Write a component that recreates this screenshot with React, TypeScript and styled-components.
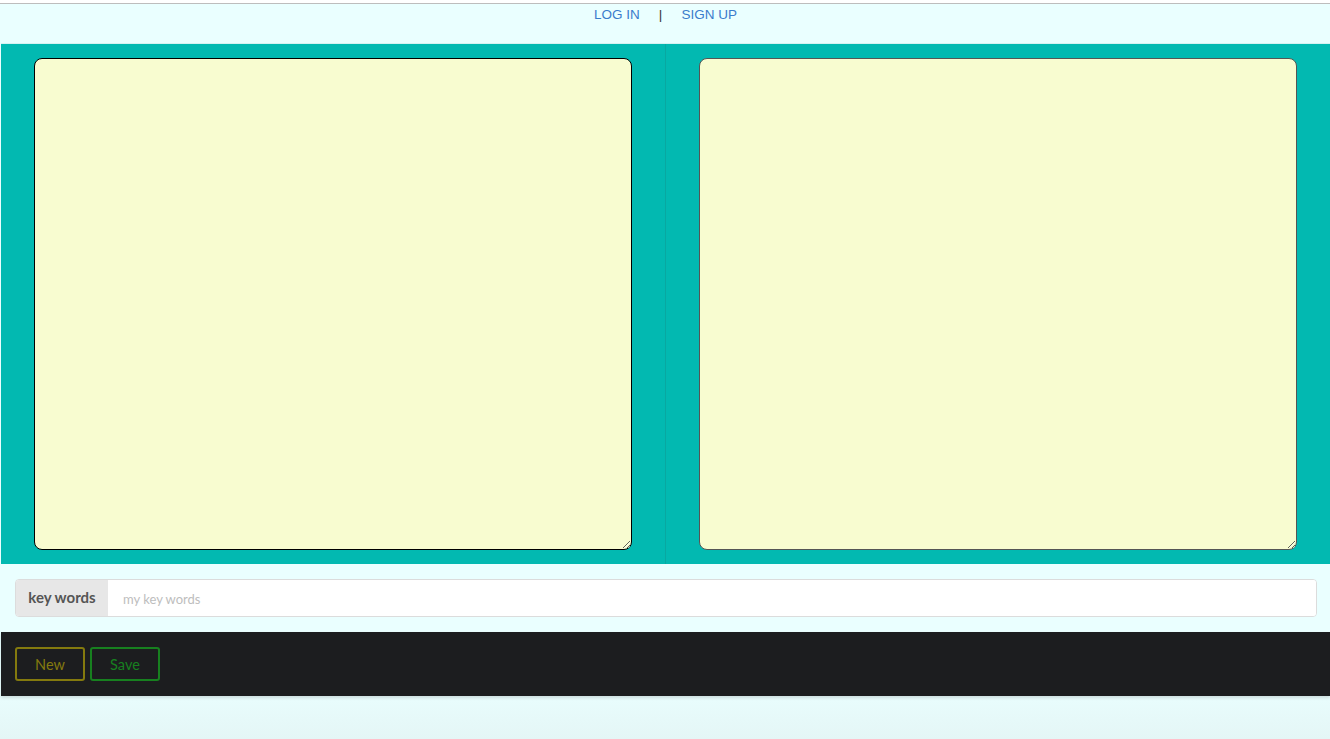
import React from "react";
import styled, { createGlobalStyle } from "styled-components";

const Global = createGlobalStyle`
  html, body { margin: 0; padding: 0; background: #ffffff; }
  body { font-family: "Liberation Sans", Arial, sans-serif; }
  * { box-sizing: border-box; }
`;

const Page = styled.div`
  margin-top: 3px;
  border-top: 1px solid #bdbdbd;
  height: 736px;
  display: flex;
  flex-direction: column;
  background: linear-gradient(#eaffff 0%, #eaffff 92%, #e4f6f6 100%);
`;

const Header = styled.header`
  height: 40px;
  display: flex;
  justify-content: center;
  align-items: flex-start;
  padding-top: 2px;
  gap: 19px;
  font-family: "Helvetica Neue", "Liberation Sans", Arial, sans-serif;
  font-size: 13.5px;
  margin-left: 1px;
  border-bottom: 1px solid #d6f2f2;
`;

const NavLink = styled.a`
  color: #3a7ccc;
  text-decoration: none;
  line-height: 18px;
`;

const Sep = styled.span`
  color: #333;
  line-height: 18px;
`;

const Editors = styled.section`
  margin-left: 1px;
  height: 520px;
  display: grid;
  grid-template-columns: 665px 1fr;
  background: #02b9b1;
`;

const Column = styled.div<{ $divider?: boolean }>`
  padding: 14px 33px 14px 33px;
  border-right: ${(p) => (p.$divider ? "1px solid #08a8a1" : "none")};
  display: flex;
`;

const Pad = styled.textarea<{ $focused?: boolean }>`
  flex: 1;
  width: 100%;
  height: 492px;
  background: #f8fcd0;
  border: 1px solid ${(p) => (p.$focused ? "#000" : "#555")};
  border-radius: 8px;
  outline: none;
  padding: 8px;
  font-family: "Lato", sans-serif;
  font-size: 14px;
`;

const KeyRow = styled.div`
  margin-left: 1px;
  padding: 15px 13px 15px 14px;
  height: 68px;
`;

const InputGroup = styled.div`
  display: flex;
  height: 38px;
  border: 1px solid #dcdcdc;
  border-radius: 4px;
  overflow: hidden;
  background: #fff;
`;

const Addon = styled.span`
  width: 92px;
  background: #e7e7e7;
  color: #555;
  font-family: "Lato", sans-serif;
  font-weight: 700;
  font-size: 15px;
  display: flex;
  align-items: center;
  justify-content: center;
  padding-bottom: 3px;
`;

const KeyInput = styled.input`
  flex: 1;
  border: none;
  outline: none;
  padding: 2px 15px 0;
  font-family: "Lato", sans-serif;
  font-size: 13px;
  color: #333;
  &::placeholder { color: #bdbdbd; }
`;

const Footer = styled.footer`
  margin-left: 1px;
  height: 64px;
  background: #1c1d1f;
  padding: 15px 14px;
  display: flex;
  gap: 5px;
  box-shadow: 0 2px 3px rgba(0, 0, 0, 0.12);
`;

const Btn = styled.button<{ $color: string }>`
  width: 70px;
  height: 34px;
  background: transparent;
  border: 2px solid ${(p) => p.$color};
  border-radius: 3px;
  color: ${(p) => p.$color};
  font-family: "Lato", sans-serif;
  font-size: 14.5px;
  padding: 0;
  cursor: pointer;
`;

export default function App() {
  return (
    <>
      <Global />
      <Page>
        <Header>
          <NavLink href="#">LOG IN</NavLink>
          <Sep>|</Sep>
          <NavLink href="#">SIGN UP</NavLink>
        </Header>
        <Editors>
          <Column $divider>
            <Pad $focused />
          </Column>
          <Column>
            <Pad />
          </Column>
        </Editors>
        <KeyRow>
          <InputGroup>
            <Addon>key words</Addon>
            <KeyInput placeholder="my key words" />
          </InputGroup>
        </KeyRow>
        <Footer>
          <Btn $color="#847a0e">New</Btn>
          <Btn $color="#17801f">Save</Btn>
        </Footer>
      </Page>
    </>
  );
}
